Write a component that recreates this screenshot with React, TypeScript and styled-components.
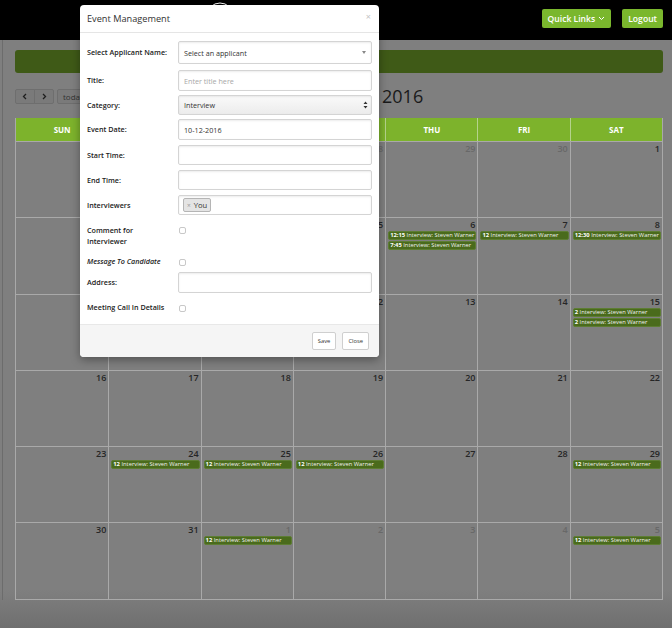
import React from "react";
import styled, { createGlobalStyle } from "styled-components";

const GlobalStyle = createGlobalStyle`
  html, body {
    margin: 0;
    padding: 0;
    background: #7e7e7e;
    font-family: "Open Sans", "Liberation Sans", sans-serif;
  }
  * { box-sizing: border-box; }
`;

const Page = styled.div`
  position: relative;
  width: 672px;
  height: 628px;
  overflow: hidden;
  background: linear-gradient(#7f7f7f 0, #7f7f7f 590px, #6f6f6f 628px);
`;

const TopBar = styled.div`
  height: 40px;
  background: #000;
  display: flex;
  align-items: flex-start;
  padding-right: 9px;
`;

const Logo = styled.svg`
  margin-left: 205px;
  margin-top: 2px;
`;

const Spacer = styled.div`
  flex: 1;
`;

const TopButton = styled.button`
  margin-top: 9px;
  margin-left: 11px;
  height: 19px;
  padding: 0 6px;
  border: none;
  border-radius: 2px;
  background: #7ab72d;
  color: #fff;
  font-family: "Open Sans", sans-serif;
  font-weight: 600;
  font-size: 8.6px;
  display: flex;
  align-items: center;
  gap: 3px;
`;

const Main = styled.div`
  margin-left: 2px;
  border-left: 1px solid #6c6c6c;
  padding: 10px 9px 0 12px;
`;

const Banner = styled.div`
  height: 23px;
  background: #3f5a17;
  border-radius: 3px;
`;

const Toolbar = styled.div`
  margin-top: 15px;
  height: 16px;
  display: flex;
  align-items: center;
`;

const BtnGroup = styled.div`
  display: flex;
`;

const NavButton = styled.button<{ $first?: boolean; $last?: boolean }>`
  height: 15px;
  width: 20px;
  padding: 0;
  border: 1px solid #6e6e6e;
  background: #7a7a7a;
  border-radius: ${(p) => (p.$first ? "2px 0 0 2px" : "0 2px 2px 0")};
  margin-left: ${(p) => (p.$last ? "-1px" : "0")};
  display: flex;
  align-items: center;
  justify-content: center;
`;

const TodayButton = styled.button`
  height: 15px;
  width: 40px;
  margin-left: 3px;
  padding: 0 5px;
  border: 1px solid #6e6e6e;
  border-radius: 2px;
  background: #7a7a7a;
  color: #333;
  font-family: "Open Sans", sans-serif;
  font-size: 8px;
  text-align: left;
`;

const Title = styled.h2`
  margin: 0 0 0 212px;
  font-size: 18px;
  font-weight: 400;
  color: #1a1a1a;
  line-height: 18px;
`;

const Calendar = styled.div`
  margin-top: 14px;
  width: 648px;
  border: 1px solid #a9a9a9;
  border-top: none;
`;

const HeadRow = styled.div`
  display: grid;
  grid-template-columns: repeat(7, 1fr);
  background: #7db32c;
  height: 23px;
`;

const HeadCell = styled.div`
  border-left: 1px solid #b5d38c;
  &:first-child { border-left: none; }
  display: flex;
  align-items: center;
  justify-content: center;
  color: #fff;
  font-weight: 700;
  font-size: 8px;
`;

const Week = styled.div`
  display: grid;
  grid-template-columns: repeat(7, 1fr);
  height: 76.3px;
  border-top: 1px solid #a9a9a9;
`;

const DayCell = styled.div`
  border-left: 1px solid #a9a9a9;
  &:first-child { border-left: none; }
  min-width: 0;
  overflow: hidden;
`;

const DayNum = styled.div<{ $other?: boolean }>`
  height: 13px;
  padding: 1px 2px 0 0;
  text-align: right;
  font-size: 9px;
  line-height: 12px;
  font-weight: 600;
  color: ${(p) => (p.$other ? "#686868" : "#262626")};
`;

const EventBar = styled.div`
  margin: 0 1px 1px 2px;
  height: 9px;
  padding: 0 1px;
  background: #4a6b1c;
  border: 1px solid #5d7d33;
  border-radius: 2px;
  color: #f0f0f0;
  font-size: 5.8px;
  line-height: 7px;
  white-space: nowrap;
  overflow: hidden;
  b { font-weight: 700; color: #fff; }
`;

const Modal = styled.div`
  position: absolute;
  left: 80px;
  top: 5px;
  width: 299px;
  background: #fff;
  border-radius: 4px;
  box-shadow: 0 3px 10px rgba(0, 0, 0, 0.35);
  overflow: hidden;
`;

const ModalHeader = styled.div`
  height: 28px;
  border-bottom: 1px solid #e5e5e5;
  display: flex;
  align-items: center;
  padding: 0 8px 0 7px;
  font-size: 9.2px;
  color: #333;
`;

const CloseX = styled.span`
  margin-left: auto;
  color: #c4c4c4;
  font-size: 9px;
  margin-top: -4px;
`;

const ModalBody = styled.div`
  padding: 8px 7px 11px 7px;
`;

const FormRow = styled.div<{ $mt?: number; $top?: boolean }>`
  display: grid;
  grid-template-columns: 91px 194px;
  align-items: ${(p) => (p.$top ? "start" : "center")};
  margin-top: ${(p) => p.$mt ?? 0}px;
`;

const Label = styled.label<{ $italic?: boolean }>`
  font-size: 7.2px;
  font-weight: 600;
  line-height: 11px;
  color: #222;
  font-style: ${(p) => (p.$italic ? "italic" : "normal")};
`;

const Field = styled.div<{ $h: number; $grey?: boolean }>`
  height: ${(p) => p.$h}px;
  border: 1px solid #d4d4d4;
  border-radius: 2px;
  box-shadow: inset 0 1px 2px rgba(0, 0, 0, 0.08);
  background: ${(p) => (p.$grey ? "linear-gradient(#fafafa, #ececec)" : "#fff")};
  display: flex;
  align-items: center;
  padding: 0 3px 0 5px;
  font-size: 7.2px;
  color: #333;
`;

const Placeholder = styled.span`
  color: #a8a8a8;
`;

const Arrow = styled.svg`
  margin-left: auto;
  margin-right: 2px;
`;

const UpDown = styled.svg`
  margin-left: auto;
`;

const Tag = styled.span`
  height: 14px;
  padding: 0 3px;
  margin-left: -1px;
  border: 1px solid #b5b5b5;
  border-radius: 2px;
  background: #e4e4e4;
  font-size: 7.6px;
  color: #333;
  display: flex;
  align-items: center;
  gap: 3px;
  i { font-style: normal; color: #999; font-size: 6.5px; }
`;

const Check = styled.span`
  width: 7px;
  height: 7px;
  margin-left: 1px;
  margin-top: 2px;
  border: 1px solid #c8c8c8;
  border-radius: 2px;
  background: #fff;
  display: block;
`;

const Footer = styled.div`
  height: 33px;
  background: #f5f5f5;
  border-top: 1px solid #e8e8e8;
  display: flex;
  justify-content: flex-end;
  align-items: center;
  gap: 6px;
  padding-right: 10px;
`;

const FooterButton = styled.button`
  height: 18px;
  padding: 0 5px;
  border: 1px solid #cfcfcf;
  border-radius: 2px;
  background: #fff;
  font-family: "Open Sans", sans-serif;
  font-size: 5.8px;
  color: #333;
`;

type Ev = { time: string };
type Day = { n: number; other?: boolean; events?: Ev[] };

const mk = (n: number, other?: boolean, events?: string[]): Day => ({
  n,
  other,
  events: events?.map((t) => ({ time: t })),
});

const weeks: Day[][] = [
  [mk(25, true), mk(26, true), mk(27, true), mk(28, true), mk(29, true), mk(30, true), mk(1)],
  [mk(2), mk(3), mk(4), mk(5), mk(6, false, ["12:15", "7:45"]), mk(7, false, ["12"]), mk(8, false, ["12:30"])],
  [mk(9), mk(10), mk(11), mk(12), mk(13), mk(14), mk(15, false, ["2", "2"])],
  [mk(16), mk(17), mk(18), mk(19), mk(20), mk(21), mk(22)],
  [mk(23), mk(24, false, ["12"]), mk(25, false, ["12"]), mk(26, false, ["12"]), mk(27), mk(28), mk(29, false, ["12"])],
  [mk(30), mk(31), mk(1, true, ["12"]), mk(2, true), mk(3, true), mk(4, true), mk(5, true, ["12"])],
];

const days = ["SUN", "MON", "TUE", "WED", "THU", "FRI", "SAT"];

const Chevron = ({ left }: { left?: boolean }) => (
  <svg width="6" height="7" viewBox="0 0 6 7">
    <path
      d={left ? "M4 1 L1.5 3.5 L4 6" : "M2 1 L4.5 3.5 L2 6"}
      fill="none"
      stroke="#1e1e1e"
      strokeWidth="1.3"
    />
  </svg>
);

const App: React.FC = () => {
  return (
    <Page>
      <GlobalStyle />
      <TopBar>
        <Logo width="30" height="30" viewBox="0 0 30 30">
          <circle cx="15" cy="14" r="13" fill="none" stroke="#fff" strokeWidth="1" />
        </Logo>
        <Spacer />
        <TopButton>
          Quick Links
          <svg width="7" height="5" viewBox="0 0 7 5">
            <path d="M1 1 L3.5 3.5 L6 1" fill="none" stroke="#fff" strokeWidth="1" />
          </svg>
        </TopButton>
        <TopButton>Logout</TopButton>
      </TopBar>

      <Main>
        <Banner />
        <Toolbar>
          <BtnGroup>
            <NavButton $first>
              <Chevron left />
            </NavButton>
            <NavButton $last>
              <Chevron />
            </NavButton>
          </BtnGroup>
          <TodayButton>today</TodayButton>
          <Title>October 2016</Title>
        </Toolbar>

        <Calendar>
          <HeadRow>
            {days.map((d) => (
              <HeadCell key={d}>{d}</HeadCell>
            ))}
          </HeadRow>
          {weeks.map((w, i) => (
            <Week key={i}>
              {w.map((d, j) => (
                <DayCell key={j}>
                  <DayNum $other={d.other}>{d.n}</DayNum>
                  {d.events?.map((e, k) => (
                    <EventBar key={k}>
                      <b>{e.time}</b> Interview: Steven Warner
                    </EventBar>
                  ))}
                </DayCell>
              ))}
            </Week>
          ))}
        </Calendar>
      </Main>

      <Modal>
        <ModalHeader>
          Event Management
          <CloseX>×</CloseX>
        </ModalHeader>
        <ModalBody>
          <FormRow>
            <Label>Select Applicant Name:</Label>
            <Field $h={23}>
              Select an applicant
              <Arrow width="4" height="3" viewBox="0 0 4 3">
                <path d="M0 0 L4 0 L2 3 Z" fill="#888" />
              </Arrow>
            </Field>
          </FormRow>
          <FormRow $mt={6}>
            <Label>Title:</Label>
            <Field $h={21}>
              <Placeholder>Enter title here</Placeholder>
            </Field>
          </FormRow>
          <FormRow $mt={4}>
            <Label>Category:</Label>
            <Field $h={20} $grey>
              Interview
              <UpDown width="5" height="8" viewBox="0 0 5 8">
                <path d="M0.5 3 L2.5 0.5 L4.5 3 Z M0.5 5 L2.5 7.5 L4.5 5 Z" fill="#333" />
              </UpDown>
            </Field>
          </FormRow>
          <FormRow $mt={4}>
            <Label>Event Date:</Label>
            <Field $h={21}>10-12-2016</Field>
          </FormRow>
          <FormRow $mt={5}>
            <Label>Start Time:</Label>
            <Field $h={20} />
          </FormRow>
          <FormRow $mt={5}>
            <Label>End Time:</Label>
            <Field $h={20} />
          </FormRow>
          <FormRow $mt={5}>
            <Label>Interviewers</Label>
            <Field $h={20}>
              <Tag>
                <i>×</i>You
              </Tag>
            </Field>
          </FormRow>
          <FormRow $mt={10} $top>
            <Label>
              Comment for
              <br />
              Interviewer
            </Label>
            <Check />
          </FormRow>
          <FormRow $mt={9}>
            <Label $italic>Message To Candidate</Label>
            <Check />
          </FormRow>
          <FormRow $mt={5}>
            <Label>Address:</Label>
            <Field $h={21} />
          </FormRow>
          <FormRow $mt={9}>
            <Label>Meeting Call In Details</Label>
            <Check />
          </FormRow>
        </ModalBody>
        <Footer>
          <FooterButton>Save</FooterButton>
          <FooterButton>Close</FooterButton>
        </Footer>
      </Modal>
    </Page>
  );
};

export default App;
